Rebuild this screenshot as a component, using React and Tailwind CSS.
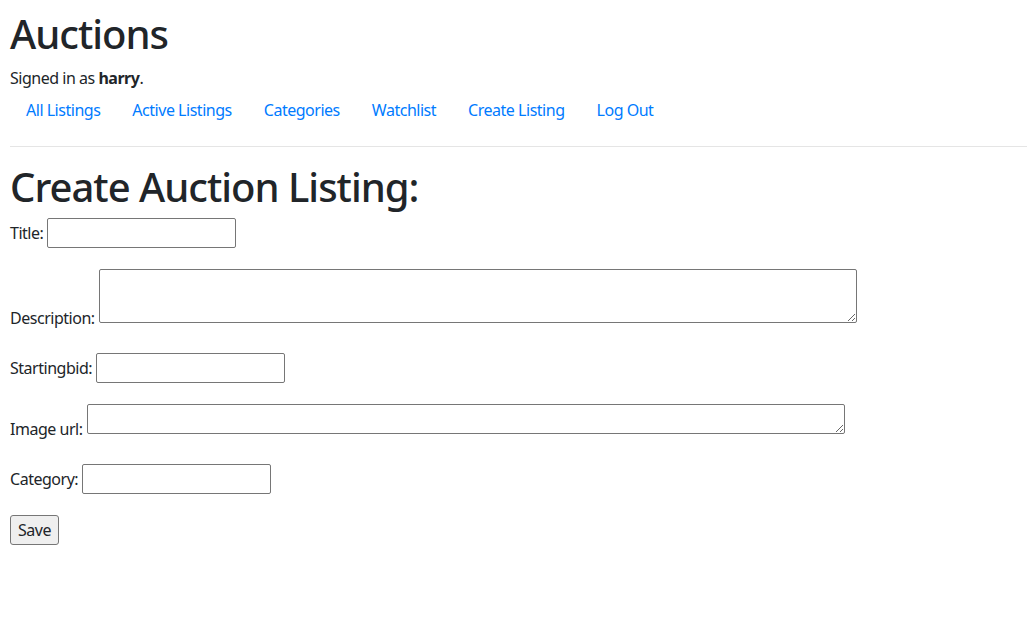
import React from 'react';

const links = ['All Listings', 'Active Listings', 'Categories', 'Watchlist', 'Create Listing', 'Log Out'];

function Field({ label, area, tall, rowClass }) {
  return (
    <div className={`flex items-end ${rowClass}`}>
      <span className={area ? '' : 'mb-[3px]'}>{label}:</span>
      {area ? (
        <textarea
          className={`ml-1 mb-[7px] ${tall ? 'h-[54px]' : 'h-[30px]'} w-[758px] resize border border-[#767676] rounded-[2px] bg-white`}
        />
      ) : (
        <input type="text" className="ml-1 h-[30px] w-[189px] border border-[#767676] rounded-[2px] bg-white" />
      )}
    </div>
  );
}

function App() {
  return (
    <div className="min-h-screen bg-white text-[#212529] text-base leading-6 tracking-[-0.03em] pl-[10px] pt-[10px]" style={{ fontFamily: '"Noto Sans", sans-serif' }}>
      <h1 className="text-[40px] leading-[48px] font-medium tracking-tight mb-2">Auctions</h1>
      <div>
        Signed in as <strong className="font-bold">harry</strong>.
      </div>
      <ul className="flex">
        {links.map((l) => (
          <li key={l}>
            <a href="#" className="block px-4 py-2 text-[#007bff]">{l}</a>
          </li>
        ))}
      </ul>
      <hr className="my-4 border-t border-black/10" />
      <h1 className="text-[40px] leading-[48px] font-medium tracking-tight">Create Auction Listing:</h1>
      <form className="flex flex-col items-start">
        <Field label="Title" rowClass="mt-[7px]" />
        <Field label="Description" area tall rowClass="mt-[21px]" />
        <Field label="Startingbid" rowClass="mt-[23px]" />
        <Field label="Image url" area rowClass="mt-[21px]" />
        <Field label="Category" rowClass="mt-[23px]" />
        <button type="button" className="mt-[21px] h-[30px] px-[7px] border border-[#767676] rounded-[3px] bg-[#efefef]">Save</button>
      </form>
    </div>
  );
}

export default App;
